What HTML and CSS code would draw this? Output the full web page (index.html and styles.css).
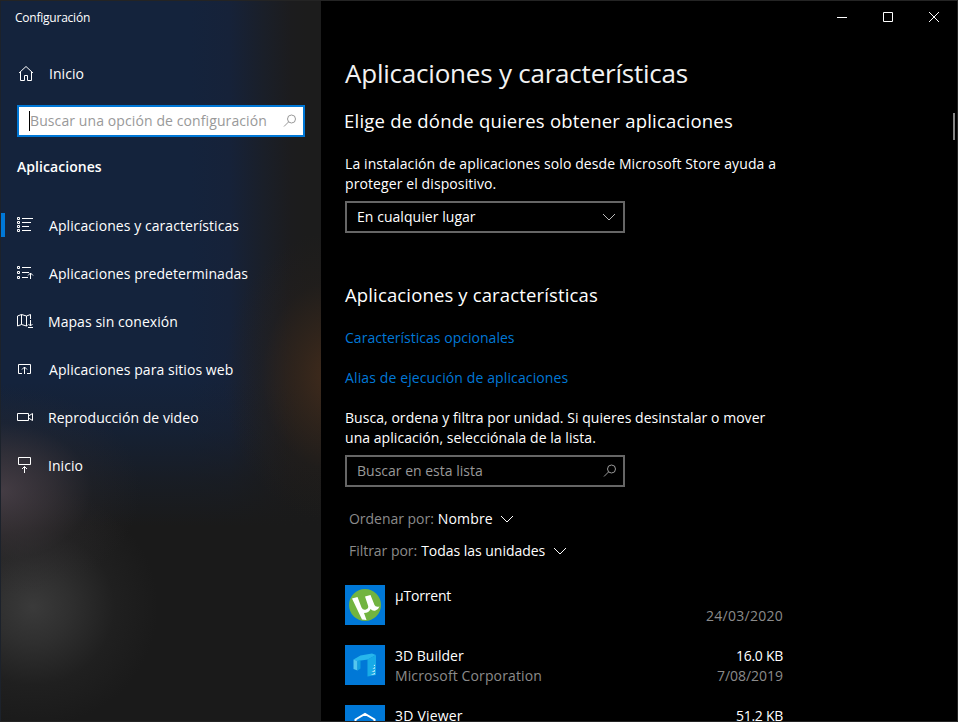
FILE: index.html
```html
<!DOCTYPE html>
<html lang="es">
<head>
<meta charset="utf-8">
<title>Configuración</title>
<link rel="stylesheet" href="styles.css">
</head>
<body>
<div class="window">
  <aside class="sidebar">
    <div class="app-title">Configuración</div>
    <a class="nav-item home"><svg class="icon" viewBox="0 0 18 18"><path d="M2 9 9 2.500 16 9M3.500 8v8.500h4v-5h3v5h4V8"/></svg><span>Inicio</span></a>
    <div class="search"><i class="caret"></i><span>Buscar una opción de configuración</span><svg class="lens" viewBox="0 0 14 14"><circle cx="8.500" cy="5" r="4"/><path d="M5.700 7.800 1 12.500"/></svg></div>
    <h3>Aplicaciones</h3>
    <nav>
      <a class="nav-item active"><svg class="icon" viewBox="0 0 18 18"><path d="M.5 1.500h2v2h-2zM.5 5.500h2v2h-2zM.5 9.500h2v2h-2zM.5 13.500h2v2h-2zM5 2.500h11M5 6.500h9M5 10.500h7M5 14.500h9"/></svg><span>Aplicaciones y características</span></a>
      <a class="nav-item"><svg class="icon" viewBox="0 0 18 18"><path d="M.5 2.500h2v2h-2zM.5 7.500h2v2h-2zM.5 12.500h2v2h-2zM5 3.500h9M5 8.500h7M5 13.500h6M13.500 15V9M11 11.500l2.500-2.500 2.500 2.500"/></svg><span>Aplicaciones predeterminadas</span></a>
      <a class="nav-item flush"><svg class="icon" viewBox="0 0 18 18"><path d="M.5 4 4.500 2.500 9.500 4l4-1.500V7M.5 4v10l4-1.500 5 1.500 1-.5M4.500 2.500v10M9.500 4v10M13.500 8v6M11.500 12l2 2 2-2M11 15.500h5"/></svg><span>Mapas sin conexión</span></a>
      <a class="nav-item"><svg class="icon" viewBox="0 0 18 18"><path d="M5 13.500H1.500v-9h12v9H10M7.500 14V7M5 9.500 7.500 7 10 9.500"/></svg><span>Aplicaciones para sitios web</span></a>
      <a class="nav-item flush"><svg class="icon" viewBox="0 0 18 18"><path d="M.5 5.500h11v7H.5zM11.500 8l4-2.500v7l-4-2.500"/></svg><span>Reproducción de video</span></a>
      <a class="nav-item flush"><svg class="icon" viewBox="0 0 18 18"><path d="M1.500 1.500h12v7h-12zM7.500 17v-6.500M5 13l2.500-2.500L10 13"/></svg><span>Inicio</span></a>
    </nav>
  </aside>
  <main class="content">
    <div class="caption">
      <svg viewBox="0 0 46 32"><path d="M18 16.500h10"/></svg>
      <svg viewBox="0 0 46 32"><path d="M18.500 11.500h9v9h-9z"/></svg>
      <svg viewBox="0 0 46 32"><path d="m18 11 10 10M28 11 18 21"/></svg>
    </div>
    <h1>Aplicaciones y características</h1>
    <h2 class="source">Elige de dónde quieres obtener aplicaciones</h2>
    <p class="store">La instalación de aplicaciones solo desde Microsoft Store ayuda a<br>proteger el dispositivo.</p>
    <div class="field select">En cualquier lugar<svg class="chevron" viewBox="0 0 14 14"><path d="m1 4 6 6 6-6"/></svg></div>
    <h2 class="features">Aplicaciones y características</h2>
    <a class="link first">Características opcionales</a>
    <a class="link">Alias de ejecución de aplicaciones</a>
    <p>Busca, ordena y filtra por unidad. Si quieres desinstalar o mover<br>una aplicación, selecciónala de la lista.</p>
    <div class="field filter">Buscar en esta lista<svg class="lens" viewBox="0 0 14 14"><circle cx="8.500" cy="5" r="4"/><path d="M5.700 7.800 1 12.500"/></svg></div>
    <div class="sort"><span class="dim">Ordenar por:</span><span class="value">Nombre</span><svg class="chevron" viewBox="0 0 14 14"><path d="m1 4 6 6 6-6"/></svg></div>
    <div class="sort"><span class="dim">Filtrar por:</span><span>Todas las unidades</span><svg class="chevron wide" viewBox="0 0 14 14"><path d="m1 4 6 6 6-6"/></svg></div>
    <ul class="apps">
      <li><svg class="tile" viewBox="0 0 40 40"><circle cx="20" cy="20" r="16" fill="#72b43f"/><path d="M7 13.500 12.500 12l4 10.500q1.500 3 4.500 2 3-1.200 2-4L20 11.500l5.500-1.500 4 10q1 2.500 5 1.500-1 3-4 4-3 .8-5-1.500-1.500 4-6.500 4l2.500 7-4.500-.5z" fill="#fff"/></svg>
        <div class="name torrent">µTorrent</div><div class="meta"><br><span class="dim date">24/03/2020</span></div></li>
      <li><svg class="tile" viewBox="0 0 40 40"><path d="m8.500 14.500 7-4L27 8.500l4 1.500-8 4.500-10.500 1.500z" fill="#27b6ec"/><path d="m8.500 14.500 4 1.500v9.500l-4-1.500z" fill="#55c6ee"/><path d="m12.500 16 3-.4v8l-3 1.900z" fill="#12a0e0"/><path d="m22.500 14.500 8.500-4.500v20l-8.500 1.500z" fill="#18abe7"/><path d="m25.500 30 4.500-2v1.300zM26.500 27l3.500-2v1.500zM27.500 24l2.500-2v1.500zM28.500 21l1.500-1.500V21z" fill="#e5f7fd"/></svg>
        <div class="name">3D Builder<br><span class="dim company">Microsoft Corporation</span></div><div class="meta">16.0 KB<br><span class="dim">7/08/2019</span></div></li>
      <li><svg class="tile" viewBox="0 0 40 40"><path d="m10.500 14.500 9.500-5.500 9.500 5.500v12L20 32l-9.500-5.500z" fill="none" stroke="#fff" stroke-width="2"/></svg>
        <div class="name viewer">3D Viewer</div><div class="meta">51.2 KB</div></li>
    </ul>
  </main>
  <div class="thumb"></div>
</div>
</body>
</html>
```
FILE: styles.css
```css
* { box-sizing: border-box; }
body { margin: 0; overflow: hidden; background: #000; color: #fff; font: 14px/20px "Open Sans", "Noto Sans", sans-serif; }
h1, h2, h3, p, ul { margin: 0; padding: 0; font-weight: 400; list-style: none; }
svg { fill: none; stroke: currentColor; stroke-width: 1; flex: none; }
.window { position: relative; display: flex; width: 958px; height: 722px; overflow: hidden; border: solid #242424; border-width: 1px 1px 1px 0; }
.sidebar {
  width: 321px; flex: none; border-left: 1px solid #1c222b; letter-spacing: .06px;
  background:
    radial-gradient(110px 145px at 332px 375px, rgba(72,46,28,.85), rgba(60,41,27,.65) 30%, rgba(44,34,27,.25) 65%, rgba(34,30,27,0)),
    radial-gradient(140px 105px at 0 490px, rgba(76,66,74,.85), rgba(66,58,64,.6) 35%, rgba(48,44,48,.22) 65%, rgba(36,36,36,0)),
    radial-gradient(125px 120px at 32px 606px, rgba(60,60,60,.95), rgba(54,54,54,.75) 30%, rgba(42,42,42,.35) 65%, rgba(30,30,30,0)),
    linear-gradient(to bottom, rgba(26,26,26,0) 380px, rgba(26,26,26,.25) 430px, rgba(26,26,26,.7) 480px, #1a1a1a 525px),
    linear-gradient(to right, #14233c 190px, #162239 228px, #1a1f29 262px, #1c1c1e 290px, #1c1c1c 305px);
}
.app-title { height: 49px; padding: 7px 0 0 14px; font-size: 12px; letter-spacing: -.23px; }
.nav-item { position: relative; display: flex; align-items: center; height: 48px; padding-left: 16px; }
.nav-item span { margin-left: 14px; }
.flush span { margin-left: 13px; }
.icon { width: 18px; height: 18px; margin-bottom: 2px; }
.active::before { content: ""; position: absolute; left: 0; top: 11px; width: 4px; height: 24px; background: #0078d7; }
.search { display: flex; align-items: center; width: 288px; height: 32px; margin: 7px 0 0 16px; padding: 0 6px 0 10px; border: 2px solid #0078d7; background: #fff; color: #999; letter-spacing: .1px; }
.caret { width: 1px; height: 20px; background: #000; }
.lens, .chevron { width: 14px; height: 14px; }
.search .lens, .field svg { margin-left: auto; }
.search .lens { margin-bottom: 1px; }
h3 { margin: 20px 0 25px 16px; font-size: 14px; font-weight: 600; letter-spacing: .06px; }
.content { flex: 1; padding-left: 24px; letter-spacing: .05px; }
.caption { display: flex; justify-content: flex-end; height: 32px; }
.caption svg { width: 46px; height: 32px; }
h1 { margin-top: 20px; font-size: 26px; line-height: 40px; letter-spacing: -.217px; color: #f2f2f2; }
h2 { font-size: 18.500px; line-height: 28px; letter-spacing: .14px; }
.source { margin: 14px 0 19px -1px; letter-spacing: .214px; }
.store { letter-spacing: .1px; }
.field { display: flex; align-items: center; width: 280px; height: 32px; margin-top: 7px; padding: 0 7px 0 10px; border: 2px solid #666; }
.filter { padding-right: 6px; color: #999; letter-spacing: 0; }
.field .chevron { color: #bbb; }
.features { margin: 48px 0 19px; }
.link { display: block; margin-bottom: 20px; color: #0078d7; letter-spacing: .12px; }
.first { letter-spacing: .02px; }
.sort { display: flex; align-items: center; height: 32px; padding-left: 4px; letter-spacing: -.03px; }
.filter + .sort { margin-top: 16px; }
.sort .chevron { margin-left: 7px; }
.sort .wide { margin-left: 8px; }
.sort .dim { margin-right: 4px; }
.value { letter-spacing: .15px; }
.dim { color: #8b8b8b; }
.apps { margin-top: 18px; width: 438px; }
.apps li { display: flex; height: 60px; }
.tile { width: 40px; height: 40px; background: #0078d7; stroke: none; }
.name { flex: 1; margin: 1px 0 0 10px; letter-spacing: 0; }
.torrent { letter-spacing: -.2px; }
.company { letter-spacing: .12px; }
.viewer { letter-spacing: .2px; }
.meta { margin-top: 1px; text-align: right; letter-spacing: -.28px; }
.meta .dim { letter-spacing: -.03px; }
.meta .date { letter-spacing: .27px; }
.thumb { position: absolute; left: 953px; top: 112px; width: 2px; height: 27px; background: #858585; }
```
